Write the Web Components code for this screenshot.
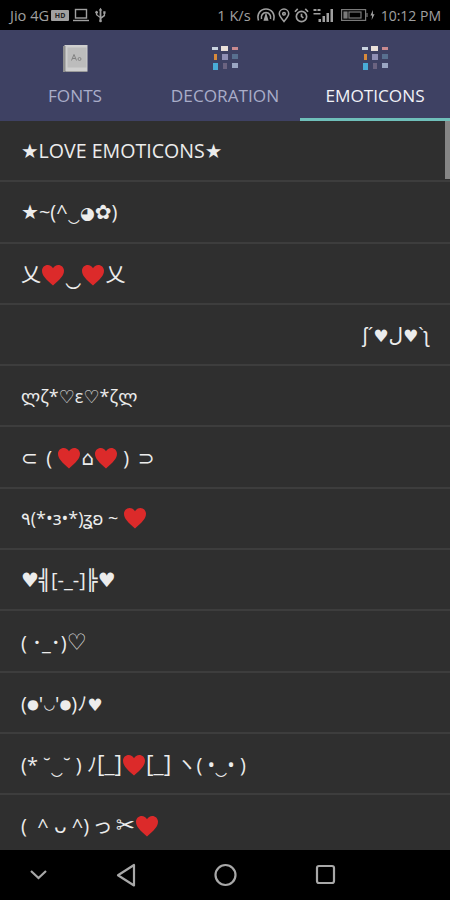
<!DOCTYPE html>
<html>
<head>
<meta charset="utf-8">
<title>Emoticons</title>
<style>
    html, body { margin: 0; padding: 0; background: #000; }
    body { width: 450px; height: 900px; overflow: hidden; font-family: "Open Sans", "Noto Sans", "DejaVu Sans", "Noto Sans CJK JP", sans-serif; }
    .dot { font-size: 0.68em; vertical-align: 0.12em; }
    .small { font-size: 0.85em; }
    .wide { font-size: 1.35em; line-height: 1; }
    .box { font-size: 1.15em; line-height: 1; }
</style>
</head>
<body>
<app-shell>
    <status-bar slot="status"></status-bar>
    <tab-bar slot="tabs"></tab-bar>
    <emoticon-list slot="list">
        <emoticon-row style="font-size:19.6px">★LOVE EMOTICONS★</emoticon-row>
        <emoticon-row>★~(^‿<span class="small">◕</span>✿)</emoticon-row>
        <emoticon-row>乂<red-heart></red-heart><span class="wide">‿</span><red-heart></red-heart>乂</emoticon-row>
        <emoticon-row end>ʃ´<span class="small">♥</span>ل<span class="small">♥</span>`ʅ</emoticon-row>
        <emoticon-row style="font-size:18px">ლζ*♡ε♡*ζლ</emoticon-row>
        <emoticon-row>⊂&nbsp;&#8201;(&nbsp;<red-heart></red-heart>⌂<red-heart></red-heart>&nbsp;)&nbsp;&#8201;⊃</emoticon-row>
        <emoticon-row style="font-size:18px">٩(*•ɜ•*)ʓʚ ~ <red-heart></red-heart></emoticon-row>
        <emoticon-row>♥╣[-_-]╠♥</emoticon-row>
        <emoticon-row>( ･_･)<span class="wide" style="font-size:1.12em">♡</span></emoticon-row>
        <emoticon-row>(<span class="dot">●</span>'<span class="dot">◡</span>'<span class="dot">●</span>)ﾉ<span class="small">♥</span></emoticon-row>
        <emoticon-row>(* ˘‿˘ ) ﾉ<span class="box">[_]</span><red-heart></red-heart><span class="box">[_]</span> ヽ( •‿• )</emoticon-row>
        <emoticon-row>(&nbsp;&nbsp;^ ᴗ ^)&#8201;っ&#8201;<span class="box">✂</span><red-heart></red-heart></emoticon-row>
    </emoticon-list>
    <nav-bar slot="nav"></nav-bar>
</app-shell>

<script>
    // Seitenrahmen: Statusleiste, Tabs, Liste, Navigation
    class AppShell extends HTMLElement {
        constructor() {
            super();
            this.attachShadow({ mode: 'open' });
            this.shadowRoot.innerHTML = `
            <style>
                :host { display: flex; flex-direction: column; width: 450px; height: 900px; background: #000; }
                .main { flex: 1; min-height: 0; display: flex; }
            </style>
            <slot name="status"></slot>
            <slot name="tabs"></slot>
            <div class="main"><slot name="list"></slot></div>
            <slot name="nav"></slot>`;
        }
    }

    class StatusBar extends HTMLElement {
        constructor() {
            super();
            this.attachShadow({ mode: 'open' });
            this.shadowRoot.innerHTML = `
            <style>
                :host { display: flex; align-items: center; justify-content: space-between; height: 30px; padding: 0 9px 0 10px; background: #000; color: #a0a0a0; font-size: 14px; }
                .side { display: flex; align-items: center; }
                svg { display: block; }
                .hd { width: 18px; height: 11px; margin-left: 2px; background: #a0a0a0; border-radius: 1px; color: #222; font-size: 7px; font-weight: 700; line-height: 11px; text-align: center; }
            </style>
            <div class="side">
                <span style="font-size:14.6px">Jio 4G</span>
                <span class="hd">HD</span>
                <svg width="16" height="14" viewBox="0 0 16 14" style="margin-left:4px" fill="none" stroke="#a0a0a0" stroke-width="1.4"><rect x="2.500" y="1.500" width="11" height="8.500"/><path d="M0 12.500h16"/></svg>
                <svg width="11" height="16" viewBox="0 0 12 16" style="margin-left:6px" fill="#a0a0a0"><path d="M6 0l2 3H7v7l2.500-2V6.500H9V4h2.500v2.500H11V9l-4 3v1.500H5V11L1 8V6.400A1.500 1.500 0 1 1 2.500 6.400V7.500L5 9.500V3H4z"/><circle cx="6" cy="14.500" r="1.500"/></svg>
            </div>
            <div class="side">
                <span style="font-size:14.6px">1 K/s</span>
                <svg width="20" height="16" viewBox="0 0 19 16" style="margin-left:5px" fill="none" stroke="#a0a0a0" stroke-width="1.600"><path d="M2 13.500C0 7 4 2 9.500 2S19 7 17 13.500"/><path d="M5 12C4 8.500 6.500 5.500 9.500 5.500S15 8.500 14 12"/><path d="M8 13l1.500-5 1.500 5z" fill="#a0a0a0"/></svg>
                <svg width="12" height="15" viewBox="0 0 14 16" style="margin-left:2px" fill="none" stroke="#a0a0a0" stroke-width="1.800"><path d="M7 15C3.500 11 1.500 8.500 1.500 6a5.500 5.500 0 0 1 11 0c0 2.500-2 5-5.500 9z"/><circle cx="7" cy="6" r="1.500"/></svg>
                <svg width="15" height="15" viewBox="0 0 16 16" style="margin-left:4px" fill="none" stroke="#a0a0a0" stroke-width="1.800"><circle cx="8" cy="9" r="5.500"/><path d="M8 6v3l2 1.500M1 4l3-3M15 4l-3-3"/></svg>
                <svg width="23" height="16" viewBox="0 0 22 16" style="margin-left:4px" fill="#a0a0a0"><rect x="0" y="2" width="3" height="2"/><rect x="4" y="2" width="3" height="2"/><rect x="0" y="6" width="7" height="1.500"/><rect x="5" y="12" width="2.500" height="3"/><rect x="9" y="9" width="2.500" height="6"/><rect x="13" y="6" width="2.500" height="9"/><rect x="17" y="2" width="2.500" height="13"/></svg>
                <svg width="27" height="12" viewBox="0 0 27 12" style="margin-left:5px" fill="none" stroke="#7a7a7a" stroke-width="1.200"><rect x="0.600" y="0.600" width="24" height="10.800"/><rect x="3" y="3" width="3" height="6" fill="#7a7a7a"/><rect x="8" y="3" width="12" height="6"/><path d="M26 4v4"/></svg>
                <svg width="5" height="12" viewBox="0 0 6 12" style="margin-left:2px" fill="#a0a0a0"><path d="M3.500 0L0.500 6.500H2.500L2 12l3.500-7H3.500z"/></svg>
                <span style="margin-left:6px">10:12 PM</span>
            </div>`;
        }
    }

    class TabBar extends HTMLElement {
        constructor() {
            super();
            this.attachShadow({ mode: 'open' });
            this.shadowRoot.innerHTML = `
            <style>
                :host { display: grid; grid-template-columns: repeat(3, 1fr); height: 91px; background: #3e4163; }
            </style>
            <tab-item label="FONTS" icon="book"></tab-item>
            <tab-item label="DECORATION" icon="grid"></tab-item>
            <tab-item label="EMOTICONS" icon="grid" active></tab-item>`;
        }
    }

    class TabItem extends HTMLElement {
        constructor() {
            super();
            this.attachShadow({ mode: 'open' });
        }

        connectedCallback() {
            const icon = this.getAttribute('icon') === 'book' ? this._book() : this._grid();
            this.shadowRoot.innerHTML = `
            <style>
                :host { display: flex; flex-direction: column; align-items: center; box-sizing: border-box; padding-top: 15px; color: #a9adc9; font-size: 17.2px; border-bottom: 3px solid transparent; }
                :host([active]) { color: #f1f2f7; border-bottom-color: #6fbfba; }
                svg { display: block; }
                span { margin-top: 13px; line-height: 22px; }
            </style>
            ${icon}
            <span>${this.getAttribute('label')}</span>`;
        }

        _book() {
            return `<svg width="27" height="27" viewBox="0 0 26 27">
                <rect x="2" y="0" width="23" height="26" fill="#cfcfcf"/>
                <rect x="0.500" y="1" width="2.500" height="26" fill="#8f8f8f"/>
                <rect x="3" y="26" width="22" height="1" fill="#9b9b9b"/>
                <rect x="5" y="2.500" width="19" height="20" fill="#bcbcbc"/>
                <path d="M9 15.500l2.500-6 2.500 6M10 13.500h3" fill="none" stroke="#7a7a7a" stroke-width="0.900"/>
                <circle cx="17" cy="14" r="1.500" fill="none" stroke="#7a7a7a" stroke-width="0.800"/>
            </svg>`;
        }

        _grid() {
            const cells = [
                [0, 2, 6, 3, '#c9d3de'], [9, 1, 7, 5, '#e9dfd8'], [20, 2, 6, 3, '#c98a8f'],
                [2, 9, 3, 6, '#d98a3a'], [10, 9, 6, 6, '#8f8fb5'], [20, 9, 6, 5, '#58708f'],
                [1, 18, 5, 7, '#49abd6'], [11, 18, 4, 6, '#6b6380'], [20, 18, 6, 5, '#9aa6c2']
            ];
            return `<svg width="27" height="27" viewBox="0 0 27 27">${cells.map(c => `<rect x="${c[0]}" y="${c[1]}" width="${c[2]}" height="${c[3]}" fill="${c[4]}"/>`).join('')}</svg>`;
        }
    }

    class EmoticonList extends HTMLElement {
        constructor() {
            super();
            this.attachShadow({ mode: 'open' });
            this.shadowRoot.innerHTML = `
            <style>
                :host { display: block; position: relative; flex: 1; width: 450px; height: 729px; overflow: hidden; background: #2f2f2f; color: #ececec; }
                .thumb { position: absolute; top: 0; right: 0; width: 5px; height: 58px; background: #858585; }
            </style>
            <slot></slot>
            <div class="thumb"></div>`;
        }
    }

    class EmoticonRow extends HTMLElement {
        constructor() {
            super();
            this.attachShadow({ mode: 'open' });
            this.shadowRoot.innerHTML = `
            <style>
                :host { display: flex; align-items: center; box-sizing: border-box; height: 61.3px; padding: 0 21px; border-bottom: 2px solid #3d3d3d; font-size: 20px; white-space: nowrap; }
                :host([end]) { justify-content: flex-end; }
                .text { display: block; }
            </style>
            <span class="text"><slot></slot></span>`;
        }
    }

    // Emoji-Herz als SVG, damit es auch ohne Farb-Emoji-Schrift rot ist
    class RedHeart extends HTMLElement {
        constructor() {
            super();
            this.attachShadow({ mode: 'open' });
            this.shadowRoot.innerHTML = `
            <style>
                :host { display: inline-block; width: 24px; height: 22px; vertical-align: -4px; }
                svg { display: block; }
            </style>
            <svg width="24" height="22" viewBox="0 0 24 22"><path fill="#dc2a2a" d="M12 21.500C5 15.500 1 11.500 1 6.800 1 3.300 3.700 1 6.700 1 9 1 11 2.300 12 4.300 13 2.300 15 1 17.300 1 20.300 1 23 3.300 23 6.800 23 11.500 19 15.500 12 21.500z"/></svg>`;
        }
    }

    class NavBar extends HTMLElement {
        constructor() {
            super();
            this.attachShadow({ mode: 'open' });
            this.shadowRoot.innerHTML = `
            <style>
                :host { display: block; position: relative; height: 50px; background: #000; }
                svg { position: absolute; left: 0; top: 0; }
            </style>
            <svg width="450" height="50" viewBox="0 0 450 50" fill="none" stroke="#a8a8a8" stroke-width="2.200">
                <path d="M31 21l7.500 7 7.500-7"/>
                <path d="M134 15v20.500l-16-10.250z" stroke-linejoin="round"/>
                <circle cx="225.500" cy="25" r="10"/>
                <rect x="317" y="16" width="17" height="17" rx="2"/>
            </svg>`;
        }
    }

    customElements.define('app-shell', AppShell);
    customElements.define('status-bar', StatusBar);
    customElements.define('tab-bar', TabBar);
    customElements.define('tab-item', TabItem);
    customElements.define('emoticon-list', EmoticonList);
    customElements.define('emoticon-row', EmoticonRow);
    customElements.define('red-heart', RedHeart);
    customElements.define('nav-bar', NavBar);
</script>
</body>
</html>
